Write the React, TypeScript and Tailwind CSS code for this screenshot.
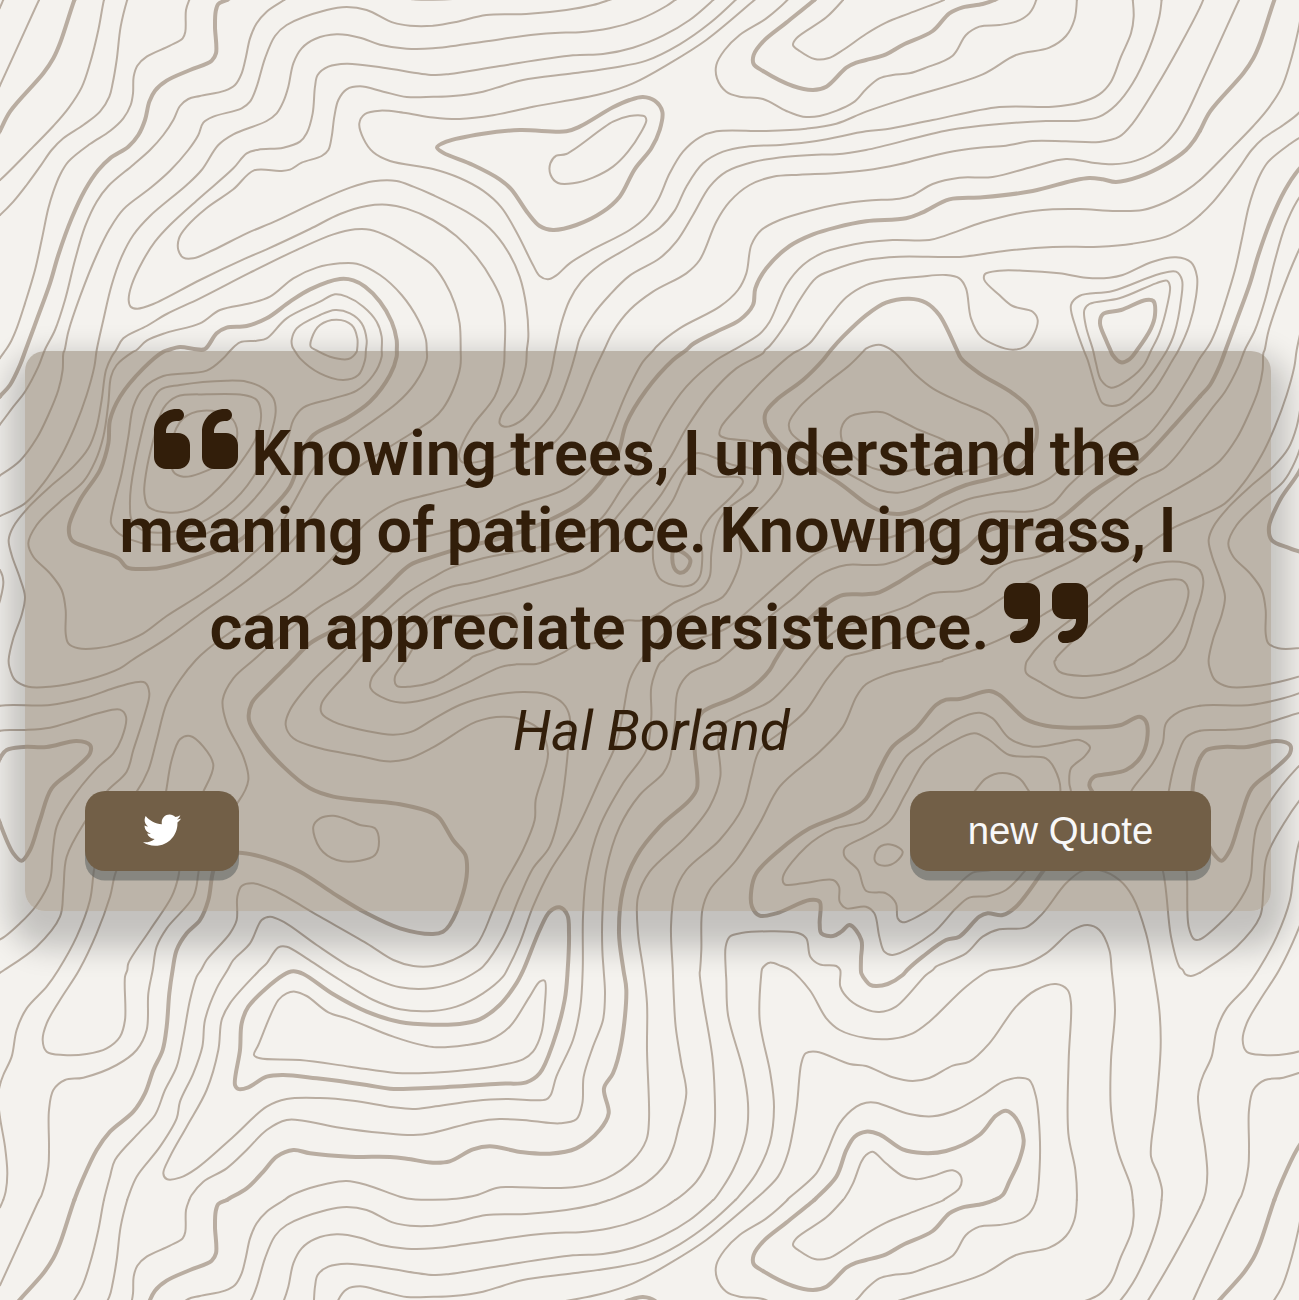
import React from "react";
import { FaQuoteLeft, FaQuoteRight, FaTwitter } from "react-icons/fa6";

type Point = [number, number];

interface Cell {
  x: number;
  y: number;
  w: number;
  h: number;
  top: number;
  lines: string;
}

// Contour lines, one per row. "H" marks an index (heavy) contour, "Z" a closed one.
// Cell coordinates are three units per pixel.
const CELLS: Cell[] = [
  {
    x: 0, y: 0, w: 433, h: 350, top: 0,
    lines: `
12,-6 0,24
118,-6 60,125 0,256
H 224,-6 180,130 160,175 130,220 30,335 0,392
312,-6 295,90 270,190 245,262 205,325 160,378 100,440 0,540
382,-6 362,80 350,180 338,250 328,290 300,335 250,375 190,415 155,450 120,500 80,555 40,605 0,645
568,-6 558,30 556,95 548,115 510,137 440,170 412,197 401,230 399,280 392,315 370,355 330,393 270,432 205,485 180,525 160,575 145,625 125,720 105,810 75,910 50,985 30,1030 0,1072
H 690,-4 655,12 647,35 645,80 648,160 635,182 570,210 500,242 465,272 448,305 435,360 415,405 385,440 330,475 295,510 255,570 215,655 175,765 150,850 110,960 65,1078
860,-4 800,35 770,70 750,115 738,170 725,220 705,255 675,272 600,288 565,297 540,318 520,360 490,405 450,450 400,494 325,558 290,605 255,680 225,780 195,900 165,990 120,1080
1299,77 1230,77 1180,68 1100,30 1040,21 980,30 860,75 825,108 795,175 770,260 750,305 725,325 640,350 610,368 595,405 565,450 510,512 450,565 370,628 330,685 290,765 240,890 205,995 190,1080
1299,145 1220,146 1140,134 1080,113 1010,103 945,117 905,145 880,190 865,260 850,305 830,340 800,363 700,403 655,435 605,510 560,555 450,648 400,705 365,770 335,855 310,960 283,1080
1299,225 1150,203 1040,191 985,200 953,225 945,260 938,340 920,400 900,425 850,443 775,449 740,460 700,505 600,593 510,675 465,725 430,780 395,855 386,900 392,920 412,926 460,912 600,840 735,776 800,748 930,687 1020,642 1100,618 1160,614 1220,626 1299,660
1299,290 1220,291 1150,275 1080,259 1040,268 1015,300 1003,350 995,410 985,450 965,468 905,488 870,509 840,513 762,511 700,568 620,624 560,680 537,715 535,750 550,773 580,775 640,750 740,700 830,662 950,605 1050,563 1120,544 1190,543 1240,560 1299,585
1299,352 1210,338 1140,332 1095,342 1078,370 1090,415 1120,457 1170,483 1299,507
1299,797 1240,755 1170,712 1110,689 1065,688 1000,703 900,745 750,818 600,895 500,942 440,978 370,1015 340,1055 325,1085
1285,1085 1278,1020 1255,960 1205,885 1140,825 1070,791 1020,790 950,803 880,835 810,890 750,910 660,930 600,970 500,998 440,1022 380,1080
H 1192,1085 1190,1020 1175,965 1140,905 1095,860 1060,841 1020,837 930,868 870,905 800,955 740,978 680,983 650,1000 615,1047 590,1048 540,1041 500,1055 445,1090
1145,1085 1145,1010 1130,965 1090,920 1040,890 1005,883 960,905 860,955 800,1015 770,1022 720,1027 690,1050 665,1080
1098,1085 1100,1020 1085,970 1050,940 1005,930 960,945 890,985 875,1020 877,1040 880,1065
1072,1100 1072,1015 1055,975 1010,959 960,975 935,1015 932,1040 950,1062`,
  },
  {
    x: 433, y: 0, w: 433, h: 350, top: 0,
    lines: `
0,77 70,66 160,45 280,42 400,30 480,15 540,-4
0,145 150,125 300,104 380,98 440,97 530,85 620,58 700,18 730,-3
0,225 50,222 200,198 420,166 510,162 600,143 690,107 770,60 845,-4
0,291 60,288 150,275 210,257 270,240 420,220 540,203 640,182 740,133 830,70 912,-4
0,353 80,357 180,346 300,320 500,283 600,250 710,190 820,120 970,-5
1070,-5 1000,55 920,105 875,150 850,195 852,235 880,275 920,290 990,297 1060,333 1110,350 1160,348 1260,308 1299,267
H 1150,-5 1060,68 990,125 962,165 962,192 990,213 1080,258 1140,270 1180,260 1240,203 1270,188 1299,180
1235,-6 1180,52 1090,115 1080,135 1100,153 1145,177 1185,175 1230,150 1299,102
HZ 630,291 665,302 688,335 680,390 655,445 605,508 560,590 510,635 430,675 360,690 320,678 285,640 235,568 200,538 120,495 30,458 12,442 40,425 150,401 260,390 400,394 440,380 540,322 590,300
Z 636,350 630,347 590,348 540,365 400,462 370,467 352,490 353,525 375,549 420,550 480,533 540,500 585,455 625,395 640,362
0,507 80,534 150,572 205,622 255,705 300,795 320,828 345,838 370,826 410,790 470,753 590,690 640,650 675,600 710,520 750,455 800,412 850,394 1000,393 1120,386 1210,371 1299,335
0,585 100,635 170,685 225,755 260,830 280,920 286,1010 278,1085
0,660 70,708 130,770 180,845 207,905 216,970 215,1085
0,797 35,845 65,910 80,970 84,1085
358,1085 385,970 410,900 445,845 500,795 600,735 680,684 725,632 760,560 810,490 870,455 940,440 1050,434 1150,423 1299,394
422,1085 440,1015 480,945 530,885 590,827 680,775 730,725 780,645 830,560 880,515 960,486 1060,470 1150,464 1210,463 1299,450
497,1085 540,995 590,930 660,875 760,820 800,780 850,665 890,605 950,555 1020,530 1100,524 1200,520 1299,511
632,1085 670,1040 740,985 860,920 915,870 940,820 955,735 985,690 1040,660 1130,632 1220,612 1299,602
H 722,1085 780,1032 850,995 920,960 960,915 967,865 1000,805 1070,738 1140,703 1210,682 1299,664
850,1085 980,1002 1010,965 1060,855 1110,795 1170,758 1230,740 1299,727
945,1085 1010,1038 1060,970 1100,900 1150,833 1200,810 1299,780
1060,1085 1130,1030 1190,950 1240,892 1299,855
H 1155,1090 1230,1010 1299,946
1260,1085 1299,1045`,
  },
  {
    x: 866, y: 0, w: 334, h: 350, top: 0,
    lines: `
0,102 60,68 130,40 240,-2
H 0,180 60,163 110,135 200,93 250,40 290,22 350,12 395,-4
0,268 40,235 80,225 130,220 180,203 260,167 300,105 340,80 400,75 450,65 490,40 512,-6
0,335 120,295 350,223 450,165 550,143 600,108 625,60 633,-6
0,394 60,388 200,360 400,321 560,320 640,308 700,283 735,245 765,170 795,100 803,50 800,-6
0,450 250,390 400,372 540,363 640,362 700,350 750,315 800,250 850,145 880,50 887,-6
0,511 100,493 240,458 340,443 420,437 500,423 600,424 700,426 760,410 800,370 870,262 940,140 1002,20
0,602 100,596 140,586 200,552 280,533 380,531 500,500 600,477 680,488 740,493 810,482 880,447 930,395 965,335 1002,256 1030,200
H 0,664 120,655 170,637 250,598 350,592 500,573 620,542 670,534 710,538 750,546 820,530 900,492 960,450 985,420 1002,392 1030,340
0,727 80,720 190,720 240,706 350,667 450,641 560,628 640,627 750,633 830,630 900,606 960,572 1002,540 1030,512
0,780 100,770 290,770 420,752 560,741 700,740 800,731 900,710 960,678 1002,645 1030,617
0,856 60,840 160,830 240,825 280,835 300,865 315,955 345,1010 390,1036 440,1049 475,1041 500,1010 515,960 500,935 440,918 400,885 355,840 357,822 400,812 470,812 580,820 660,833 730,833 770,825 860,785 930,772 975,787 993,830 990,890 970,975 927,1085
H 0,946 60,908 130,896 180,908 220,945 285,1075
0,1047 20,1037 45,1035 80,1050 115,1080
890,1085 925,1000 945,900 948,840 930,815 880,822 740,873 640,888 615,915 630,985 665,1085
835,1085 880,1000 905,910 912,860 903,842 870,850 760,895 670,912 655,930 660,980 690,1085
H 736,1055 720,1020 702,970 710,943 765,930 840,900 862,903 867,945 855,985 815,1050 795,1070
1002,1072 995,1080`,
  },
  {
    x: 0, y: 350, w: 433, h: 310, top: 30,
    lines: `
35,5 20,28 0,52
H 90,0 60,75 30,135 0,170
145,0 115,80 75,155 40,200 0,253
200,0 190,40 188,90 175,150 145,225 110,295 60,362 0,406
295,0 283,80 260,165 225,260 185,345 130,430 75,490 0,528
380,0 335,50 318,90 305,180 290,260 265,325 220,380 150,440 90,497 40,560 26,600 35,645 60,715 75,770 65,825 40,895 25,960 28,995
460,0 400,35 350,75 333,110 325,190 310,290 285,365 250,425 180,485 110,555 85,610 100,650 150,700 185,750 197,810 197,880 205,910 235,925 290,925 360,910 430,880 500,828 600,765 680,708 760,640 830,570 880,490 930,400 970,350 1080,270 1190,190 1245,130 1280,60 1278,0
H 1190,0 1190,50 1170,105 1110,185 1040,235 940,285 905,340 870,440 790,530 720,600 600,650 500,680 440,687 380,682 355,655 270,625 215,600 207,560 240,480 300,390 325,310 330,240 360,170 430,85 490,35 520,5
1145,0 1145,50 1120,105 1070,152 1000,175 910,203 880,240 865,290 820,400 760,480 700,535 620,580 530,610 450,613 390,598 350,575 333,550 340,500 365,400 385,290 400,200 430,145 490,108 620,92 670,55 710,15 740,0
Z 390,500 395,540 430,572 480,578 560,565 680,500 760,410 810,290 827,215 820,175 790,145 740,125 680,122 540,135 480,150 445,210 420,300 393,440
Z 433,460 445,500 510,518 580,505 640,460 720,370 770,290 783,220 770,180 730,165 620,163 530,170 490,205 460,300 438,400
Z 520,395 550,410 600,400 680,355 712,280 690,230 610,212 550,235 515,310
1098,-5 1095,60 1075,105 1030,120 960,100 900,55 877,10 877,-5
1072,-5 1070,35 1045,57 990,50 945,25 932,5
1299,237 1170,320 1035,410 980,465 930,535 870,610 750,715 600,822 500,895 330,990
1299,460 1190,490 1110,540 1040,610 960,690 870,765 750,840 680,885 620,930 555,990
1299,585 1210,610 1130,680 1060,740 960,800 880,860 800,925 725,990
H 1299,650 1230,675 1160,740 1080,815 1000,870 930,910 850,985
1299,712 1220,760 1150,820 1040,925 970,990
1299,762 1230,810 1150,875 1045,990
1299,815 1240,860 1170,945 1125,1000
1299,832 1265,880 1195,990
0,690 10,725 0,780`,
  },
  {
    x: 433, y: 350, w: 433, h: 310, top: 30,
    lines: `
84,-5 82,80 60,150 30,205 0,237
216,-5 212,80 185,170 120,255 85,320 78,350 90,368 150,362 220,338 290,295 365,210 410,100 440,-5
284,-5 278,80 250,160 205,225 200,250 215,260 260,245 310,190 350,110 375,0
527,0 480,100 440,195 390,280 310,350 180,410 0,460
690,0 630,65 580,160 530,280 480,375 400,445 260,495 130,550 0,585
H 800,0 720,60 640,150 580,250 555,340 500,430 440,490 350,540 220,590 80,625 0,650
945,0 850,60 760,140 690,240 640,340 570,440 500,540 400,600 150,655 50,685 0,712
1025,0 990,40 910,85 830,165 760,265 700,370 620,450 560,520 500,590 400,640 250,690 130,725 50,742 0,762
1135,0 1080,40 1000,110 920,195 865,260 860,285 880,295 960,305 1010,330 1048,380 1045,430 990,500 940,545 920,590 925,640 910,700 870,770 800,802 740,840 690,885 650,930 600,990
0,815 60,795 200,760 350,720 450,690 510,650 560,610 640,520 680,470 740,380 790,340 830,347 900,375 940,382 970,392 975,420 960,450 880,510 850,560 835,640 830,710 805,748 720,790 670,825 620,842 575,843 530,885 490,908 430,915 390,938 320,970 250,972 180,990
Z 660,620 668,560 720,480 760,400 790,385 850,410 920,412 930,425 900,465 830,535 805,580 808,650 800,710 775,735 720,735 680,715 662,670
HZ 722,632 745,635 772,660 760,690 740,698 722,680
0,832 100,828 160,826 235,822 252,850 240,895 190,925 120,950 55,990
H 1220,0 1170,60 1110,120 1030,180 997,220 1000,260 1050,320 1130,375 1220,430 1299,490
1299,26 1250,75 1180,130 1100,200 1068,250 1075,280 1140,330 1210,380 1299,430
1299,218 1250,230 1225,265 1235,320 1299,375
1299,598 1255,605 1150,640 1050,720 960,800 880,865 760,910 700,950 670,990
1299,675 1240,675 1160,705 1080,775 1010,830 940,890 860,960 785,990
H 1299,763 1230,765 1190,785 1120,845 1060,910 1010,985
1299,840 1220,865 1170,905 1100,990
1299,935 1240,950 1195,990`,
  },
  {
    x: 866, y: 350, w: 334, h: 310, top: 30,
    lines: `
80,35 150,105 200,145 280,185 370,225 410,265 428,300 420,335 380,365 280,400 150,445 95,458 40,450 0,430
0,218 50,217 100,240 160,270 210,290 240,305 250,330 240,350 160,385 100,395 40,390 0,375
H 268,20 285,55 340,100 440,160 490,205 512,260 508,310 480,360 430,400 300,435 230,465 160,505 100,522 50,515 0,490
0,598 60,595 130,570 200,530 300,480 380,462 480,445 550,415 610,360 700,280 800,205 860,155 920,60 950,0
0,675 60,672 120,650 200,590 300,535 380,515 500,513 560,490 610,435 680,375 760,325 840,290 900,220 970,110 1002,56 1035,10
H 0,763 40,757 100,725 190,670 240,655 300,625 350,580 400,562 530,563 590,530 680,455 740,415 820,365 930,250 970,205 1002,168 1050,90
1050,195 1002,253 900,380 820,420 720,500 640,570 530,645 440,665 390,690 350,730 290,752 200,760 120,800 0,840
1050,370 1002,406 900,465 830,505 740,570 640,650 560,690 470,735 400,780 320,830 190,865 60,915 0,935
1040,515 1002,528 925,562 880,590 800,650 700,715 620,770 530,825 440,880 330,928 225,960 90,990
475,990 480,960 530,905 600,850 680,790 760,725 850,675 940,665 985,678 1002,692 1016,725 1002,782 990,815 970,885 955,925 928,962 885,990
565,985 570,955 640,885 740,800 820,745 900,720 950,722 967,750 955,810 920,875 850,940 760,990
640,-5 665,60 695,160 710,190 740,198 780,185 850,110 885,60 920,0
675,-5 690,70 705,120 735,143 770,130 830,80 875,0
H 718,0 740,45 765,67 790,58 835,0`,
  },
  {
    x: 0, y: 660, w: 433, h: 310, top: 30,
    lines: `
25,0 28,50 45,90 85,110 150,110 260,90 360,55 470,0
0,167 150,165 250,145 340,115 400,98 435,98 448,130 435,190 400,300 380,365 320,425 255,515 200,620 190,720 180,800 110,890 0,968
0,242 70,240 150,233 220,213 300,188 360,179 378,200 365,265 340,310 290,355 210,455 170,530 158,610 150,690 110,765 60,820 0,868
H 0,325 20,300 70,291 140,291 230,273 270,285 270,310 220,360 155,415 120,510 90,600 65,632 40,610 0,520
612,0 540,90 500,160 470,270 445,360 410,425 350,490 300,570 282,660 270,750 230,860 155,990
220,990 290,850 330,740 350,660 400,590 480,520 498,425 515,330 540,268 570,258 610,290 640,345 610,425 570,500 545,600 535,680 515,740 450,840 385,940 375,990
795,0 700,85 668,150 680,220 730,320 745,390 715,455 650,520 605,590 595,670 580,740 500,835 470,890 452,990
H 1299,490 1200,463 1100,452 1000,440 930,415 850,350 780,270 747,210 755,160 800,110 860,50 915,0
H 512,990 530,900 560,850 600,810 625,750 638,670 655,625 715,608 800,625 900,665 1000,730 1100,790 1200,835 1299,852
Z 940,530 960,505 1000,497 1040,508 1080,525 1125,535 1137,575 1125,615 1080,632 1010,630 960,595
1035,0 940,90 870,180 857,225 880,265 960,295 1080,318 1160,334 1220,328 1299,292
1130,-30 1050,60 965,160 965,190 1000,215 1100,243 1180,254 1235,245 1299,208
1190,0 1115,85 1112,115 1160,148 1215,158 1299,142
1245,0 1185,80 1190,107 1230,110 1299,95
585,990 620,930 690,850 710,810 712,740 725,708 760,700 820,720 960,800 1100,880 1180,930 1240,948 1299,948
662,990 700,930 750,880 785,810 810,800 850,815 950,885 1050,950 1135,990
750,990 800,940 835,892 860,890 920,925 1015,990`,
  },
  {
    x: 433, y: 660, w: 433, h: 310, top: 30,
    lines: `
0,97 40,75 100,35 190,0
0,142 100,100 200,52 250,43 310,42 360,25 410,0
0,208 80,165 170,138 270,126 340,133 390,160 410,200 405,300 385,460 350,590 300,655 260,740 210,860 150,950 90,990
0,948 60,930 130,885 180,780 210,710 270,600 305,510 308,450 345,310 320,240 270,210 210,200 130,215 0,292
635,0 590,90 570,190 550,280 500,390 430,540 350,665 300,770 260,880 205,990
H 0,490 20,505 60,570 97,615 102,665 90,730 50,825 30,845 0,852
H 258,990 320,840 350,785 380,772 403,795 408,850 404,990
730,0 680,40 655,110 655,200 640,300 570,400 500,530 460,680 450,800 450,990
910,0 850,35 770,70 735,120 725,220 710,330 690,370 620,435 560,530 520,660 508,800 508,900 513,990
H 1045,0 1010,60 960,110 900,145 810,185 787,230 785,300 792,415 770,450 680,530 610,620 570,720 558,850 575,990
1145,0 1080,85 1010,155 920,195 870,225 855,270 862,380 830,470 760,560 650,665 615,740 615,850 635,990
1299,0 1230,30 1180,90 1120,180 1060,235 980,300 955,380 930,470 860,570 760,660 725,730 714,830 719,990
1299,103 1270,140 1230,230 1160,305 1040,410 980,520 910,630 830,720 808,780 805,900 800,990
H 1299,447 1250,485 1130,535 1040,600 970,670 955,720 957,770 980,797 1030,790 1130,750 1160,755 1160,820 1165,850 1200,858 1225,845 1250,825 1285,870 1284,925 1283,990
1299,510 1200,538 1120,590 1050,680 1055,703 1110,700 1200,690 1218,710 1220,755 1240,775 1299,770
1299,560 1235,595 1235,620 1275,660 1299,722
878,990 878,890 890,860 925,849 1095,849 1120,865 1132,920 1160,943 1210,948 1222,960
985,990 988,955 1010,938 1045,948 1070,962 1100,990`,
  },
  {
    x: 866, y: 660, w: 334, h: 310, top: 30,
    lines: `
0,103 60,75 200,40 230,32 330,0
H 0,447 40,360 80,290 150,235 210,165 240,149 280,147 370,123 400,135 480,208 540,227 700,232 765,225 820,200 840,215 843,270 825,320 780,360 720,373 685,380 670,405 690,450 650,520 590,580 530,665 450,770 410,795 365,790 340,800 280,860 240,870 170,920 80,990
0,510 50,440 120,320 180,275 270,210 340,188 380,205 430,265 500,290 580,280 640,270 672,292 655,320 615,355 610,400 615,425 610,500 560,560 475,665 420,720 370,738 310,743 270,775 200,850 80,915 55,905 40,860 25,790 0,770
0,558 70,515 120,430 180,330 260,275 325,250 370,270 430,315 540,325 565,355 583,425 540,520 450,600 380,658 320,668 250,730 180,785 110,817 95,805 90,760 60,730 0,722
325,425 360,385 410,369 460,385 490,425
Z 30,605 45,588 80,585 110,605 90,635 55,647 28,635
165,990 210,950 300,910 350,860 400,838 480,832 530,790 600,700 650,662 700,660 760,690 800,740 840,850 867,990
325,990 380,960 470,945 540,910 620,840 665,825 700,840 730,900 742,990
520,0 480,40 480,68 520,95 600,137 660,143 740,120 870,65 920,35 950,0
590,0 565,35 580,65 650,78 730,70 800,42 870,0
1050,166 1002,167 940,185 900,220 890,280 860,340 795,425 780,480 850,560 890,660 915,860 940,950 970,978 1002,968
1050,240 1002,242 960,262 930,330 908,425 900,500 950,600 962,665 968,830 985,868 1002,868 1030,850
H 1020,302 1002,325 985,380 980,450 1002,520 1040,610`,
  },
  {
    x: 0, y: 970, w: 433, h: 230, top: 30,
    lines: `
0,38 65,0
200,0 140,80 80,145 50,210 35,290 10,345 0,378
260,0 180,120 140,190 128,240 140,275 190,285 260,282 320,265 360,230 375,180 375,50 395,0
465,0 445,100 440,210 410,270 350,315 250,353 195,360 160,390 147,450 147,560 145,620 125,705 118,722
H 522,0 508,100 500,200 488,270 460,330 435,400 400,455 330,515 290,570 245,665 222,725
625,0 590,50 570,120 550,230 530,320 495,390 465,465 420,515 345,600 330,650 310,730
703,0 650,85 615,180 607,260 580,340 540,425 530,475 480,560 410,650 385,710 380,730
805,0 690,130 665,180 655,270 620,390 560,500 510,590 490,640 500,657 540,653 590,625 700,530 800,440 860,417 960,414 1060,422 1180,442 1240,447 1299,440
565,730 575,705 610,665 680,625 740,570 800,510 860,480 910,482 1020,503 1150,519 1240,525 1299,518
H 665,730 690,714 740,685 790,635 830,590 880,570 930,580 1050,590 1170,591 1220,596 1299,608
840,727 870,708 930,684 980,671 1040,663 1100,675 1200,710 1240,718 1299,719
H 1299,194 1200,186 1100,155 1000,103 910,42 880,34 850,45 745,140 725,190 720,270 705,375 715,387 745,382 800,350 850,345 950,355 1100,375 1170,386 1299,383
1299,338 1190,339 1050,320 900,300 780,295 762,285 775,255 835,120 860,100 885,95 920,108 985,157 1050,178 1180,230 1299,261
930,0 1020,60 1120,120 1200,148 1299,153
1020,0 1130,58 1200,82 1299,84
1170,0 1220,15 1299,18
0,470 15,560 22,640 17,695 5,735`,
  },
  {
    x: 433, y: 970, w: 433, h: 230, top: 30,
    lines: `
0,84 80,62 140,30 175,0
0,153 70,140 150,100 210,50 245,0
H 0,194 80,192 140,178 200,135 250,70 288,0
0,261 100,255 170,240 230,200 290,110 320,65 335,62 335,140 325,220 300,275 270,298 190,318 100,330 0,338
H 0,383 200,371 280,367 320,340 360,250 395,120 406,0
0,440 130,422 220,417 340,418 353,405 370,350 420,240 442,140 450,0
0,518 130,485 200,477 290,482 380,490 430,478 448,430 452,350 480,260 510,180 516,100 511,0
H 0,608 50,604 120,568 170,559 270,577 350,581 430,565 500,510 527,460 513,385 540,340 565,250 580,90 567,0
0,719 70,716 130,706 190,684 230,681 420,682 520,655 600,600 640,540 648,480 642,270 642,130 628,0
480,738 540,716 640,668 700,608 722,560 735,510 760,400 745,310 728,200 722,100 720,0
690,740 730,718 790,665 830,590 845,500 845,400 838,290 810,120 800,40 803,0
820,740 845,716 900,630 940,520 945,430 930,330 885,165 880,60 877,0
890,737 915,712 970,640 1010,550 1023,440 1012,340 980,180 985,40 986,10
1070,20 1130,90 1180,175 1220,210 1299,234
930,750 970,715 1035,650 1065,580 1090,450 1105,310 1118,280 1150,275 1250,312 1299,318
1040,740 1065,717 1150,640 1180,580 1220,490 1270,440 1299,428
H 1130,733 1150,714 1210,650 1240,570 1265,530 1299,515
1220,735 1235,714 1260,670 1285,605 1299,585
1221,20 1222,80 1250,120 1299,148
H 1282,10 1285,40 1299,62`,
  },
  {
    x: 866, y: 970, w: 334, h: 230, top: 30,
    lines: `
H 0,62 12,74 30,78 65,72 110,45 165,0
0,148 40,156 90,140 180,45 220,18 270,0
0,234 80,236 140,220 190,185 300,80 370,32 440,20 490,12 520,0
0,318 80,352 140,363 190,354 260,317 310,305 370,250 450,140 510,90 570,72 605,90 615,130 608,300 607,520 628,630 633,725
0,428 30,428 130,462 200,469 270,450 350,405 410,365 460,353 490,360 510,410 521,520 521,620 512,722
H 0,515 40,523 110,568 170,579 240,573 340,525 390,467 420,452 450,475 473,540 460,600 430,665 410,705 375,727
0,585 20,575 60,610 110,648 150,658 200,648 260,631 285,650 280,685 235,718 220,727
733,0 747,150 735,300 735,450 755,570 795,680 801,725
858,0 880,150 884,260 870,440 855,590 875,640 888,690 887,725
946,22 958,43 975,48 1002,38 1050,10
1015,345 1002,370 996,410 1002,475 1015,560`,
  },
];

const TILE = 1200;

interface Contour {
  cell: number;
  heavy: boolean;
  closed: boolean;
  points: Point[];
  before?: Point;
  after?: Point;
}

const lerp = (a: Point, b: Point, t: number): Point => [
  a[0] + (b[0] - a[0]) * t,
  a[1] + (b[1] - a[1]) * t,
];

// Cuts a polyline to a rectangle and returns the parts that lie inside.
function clip(points: Point[], x0: number, y0: number, x1: number, y1: number): Point[][] {
  const pieces: Point[][] = [];
  let current: Point[] = [];
  for (let i = 0; i < points.length - 1; i++) {
    const a = points[i];
    const b = points[i + 1];
    let enter = 0;
    let leave = 1;
    const edges: Point[] = [
      [a[0] - b[0], a[0] - x0],
      [b[0] - a[0], x1 - a[0]],
      [a[1] - b[1], a[1] - y0],
      [b[1] - a[1], y1 - a[1]],
    ];
    for (const [p, q] of edges) {
      if (p === 0) {
        if (q < 0) leave = -1;
      } else if (p < 0) enter = Math.max(enter, q / p);
      else leave = Math.min(leave, q / p);
    }
    if (enter >= leave) {
      if (current.length > 1) pieces.push(current);
      current = [];
      continue;
    }
    if (current.length === 0) current.push(lerp(a, b, enter));
    current.push(lerp(a, b, leave));
    if (leave < 1) {
      pieces.push(current);
      current = [];
    }
  }
  if (current.length > 1) pieces.push(current);
  return pieces;
}

// Brings all cells into tile coordinates and joins lines that meet on a cell border.
function buildContours(): Contour[] {
  const contours: Contour[] = [];
  CELLS.forEach((cell, index) => {
    for (const line of cell.lines.trim().split("\n")) {
      const parts = line.trim().split(" ");
      const flags = /^[HZ]+$/.test(parts[0]) ? (parts.shift() as string) : "";
      const raw = parts.map((p) => p.split(",").map(Number) as Point);
      const closed = flags.includes("Z");
      const pieces = closed
        ? [raw]
        : clip(raw, 0, cell.top, cell.w * 3, cell.top + cell.h * 3);
      for (const piece of pieces) {
        contours.push({
          cell: index,
          heavy: flags.includes("H"),
          closed,
          points: piece.map(([x, y]) => [cell.x + x / 3, cell.y + (y - cell.top) / 3]),
        });
      }
    }
  });

  const ends = contours
    .filter((c) => !c.closed)
    .flatMap((c) => [
      { c, last: false, used: false },
      { c, last: true, used: false },
    ]);
  const tip = (e: { c: Contour; last: boolean }) =>
    e.last ? e.c.points[e.c.points.length - 1] : e.c.points[0];
  const inner = (e: { c: Contour; last: boolean }) =>
    e.last ? e.c.points[e.c.points.length - 2] : e.c.points[1];
  const pairs: { a: number; b: number; dist: number; dx: number; dy: number }[] = [];
  for (let a = 0; a < ends.length; a++) {
    for (let b = a + 1; b < ends.length; b++) {
      if (ends[a].c.cell === ends[b].c.cell || ends[a].c.heavy !== ends[b].c.heavy) continue;
      const p = tip(ends[a]);
      const q = tip(ends[b]);
      const dx = Math.round((p[0] - q[0]) / TILE) * TILE;
      const dy = Math.round((p[1] - q[1]) / TILE) * TILE;
      const dist = Math.hypot(p[0] - q[0] - dx, p[1] - q[1] - dy);
      if (dist < 9) pairs.push({ a, b, dist, dx, dy });
    }
  }
  pairs.sort((m, n) => m.dist - n.dist);
  const joins: (() => void)[] = [];
  for (const { a, b, dx, dy } of pairs) {
    const ea = ends[a];
    const eb = ends[b];
    if (ea.used || eb.used) continue;
    ea.used = eb.used = true;
    const p = tip(ea);
    const q = tip(eb);
    const ia = inner(ea);
    const ib = inner(eb);
    const mid: Point = [(p[0] + q[0] + dx) / 2, (p[1] + q[1] + dy) / 2];
    joins.push(() => {
      const set = (e: typeof ea, at: Point, beyond: Point) => {
        if (e.last) {
          e.c.points[e.c.points.length - 1] = at;
          e.c.after = beyond;
        } else {
          e.c.points[0] = at;
          e.c.before = beyond;
        }
      };
      set(ea, mid, [ib[0] + dx, ib[1] + dy]);
      set(eb, [mid[0] - dx, mid[1] - dy], [ia[0] - dx, ia[1] - dy]);
    });
  }
  joins.forEach((join) => join());
  return contours;
}

// Centripetal Catmull-Rom spline as cubic Bézier segments.
function curve({ points, closed, before, after }: Contour): string {
  const n = points.length;
  const at = (i: number): Point => {
    if (closed) return points[(i + n) % n];
    if (i < 0) return before ?? points[0];
    if (i >= n) return after ?? points[n - 1];
    return points[i];
  };
  const root = (a: Point, b: Point) =>
    Math.sqrt(Math.hypot(a[0] - b[0], a[1] - b[1]));
  const control = (p0: Point, p1: Point, p2: Point): Point => {
    const d1 = root(p0, p1);
    const d2 = root(p1, p2);
    if (d1 < 0.1) return lerp(p1, p2, 1 / 3);
    const value = (k: 0 | 1) =>
      (d1 * d1 * p2[k] - d2 * d2 * p0[k] + (2 * d1 * d1 + 3 * d1 * d2 + d2 * d2) * p1[k]) /
      (3 * d1 * (d1 + d2));
    return [value(0), value(1)];
  };
  let d = `M${points[0][0].toFixed(2)} ${points[0][1].toFixed(2)}`;
  const segments = closed ? n : n - 1;
  for (let i = 0; i < segments; i++) {
    const [p0, p1, p2, p3] = [at(i - 1), at(i), at(i + 1), at(i + 2)];
    const c1 = control(p0, p1, p2);
    const c2 = control(p3, p2, p1);
    d += `C${[...c1, ...c2, ...p2].map((v) => v.toFixed(2)).join(" ")}`;
  }
  return closed ? d + "Z" : d;
}

const CONTOURS = buildContours();
const pathOf = (heavy: boolean) =>
  CONTOURS.filter((c) => c.heavy === heavy).map(curve).join("");
const LIGHT_PATH = pathOf(false);
const HEAVY_PATH = pathOf(true);

function Topography() {
  return (
    <svg
      className="absolute inset-0 h-[1300px] w-[1299px]"
      viewBox="0 0 1299 1300"
      fill="none"
      stroke="#b9ada1"
      strokeLinecap="round"
      aria-hidden="true"
    >
      <defs>
        <g id="topo">
          <path d={LIGHT_PATH} strokeWidth={2} />
          <path d={HEAVY_PATH} strokeWidth={4} />
        </g>
      </defs>
      <use href="#topo" />
      <use href="#topo" x="1200" />
      <use href="#topo" x="-1200" />
      <use href="#topo" y="-1200" />
      <use href="#topo" y="1200" />
      <use href="#topo" x="1200" y="1200" />
    </svg>
  );
}

export default function App() {
  return (
    <div className="relative h-[1300px] w-[1299px] overflow-hidden bg-[#f4f2ee] pt-[351px] pl-[25px]">
      <Topography />
      <main className="relative h-[560px] w-[1246px] rounded-[20px] bg-[#837563]/50 px-[60px] pt-10 text-[#321e0a] shadow-[0_20px_30px_17px_rgba(0,0,0,0.2)]">
        <blockquote className="font-['Roboto',sans-serif] text-[63px] leading-[77px] font-semibold [word-spacing:-3px] whitespace-nowrap">
          <div className="flex h-[101px] items-start justify-center pr-px">
            <FaQuoteLeft className="h-24 w-[84px] shrink-0" />
            <span className="ml-[13px] self-end tracking-[0.24px]">Knowing trees, I understand the</span>
          </div>
          <div className="flex h-[77px] justify-center">
            <span className="tracking-[-0.08px]">meaning of patience. Knowing grass, I</span>
          </div>
          <div className="flex h-[97px] items-start justify-center pl-px">
            <span className="mr-[14px] self-end tracking-[0.22px]">can appreciate persistence.</span>
            <FaQuoteRight className="-mt-1 h-24 w-[84px] shrink-0" />
          </div>
        </blockquote>
        <p className="mt-8 h-[66px] pl-[7px] text-center font-['Roboto',sans-serif] text-[55px] leading-[66px] italic">
          Hal Borland
        </p>
        <div className="mt-[27px] flex justify-between">
          <button className="flex h-20 w-[154px] items-center justify-center rounded-[20px] bg-[#725f47] pb-[2px] text-[38.4px] text-white shadow-[0_9.6px_0_rgba(82,88,87,0.5)]">
            <FaTwitter />
          </button>
          <button className="h-20 w-[301px] rounded-[20px] bg-[#725f47] font-['Liberation_Sans',Arial,sans-serif] text-[38.4px] text-[#f8f8f8] shadow-[0_9.6px_0_rgba(82,88,87,0.5)]">
            new Quote
          </button>
        </div>
      </main>
    </div>
  );
}
